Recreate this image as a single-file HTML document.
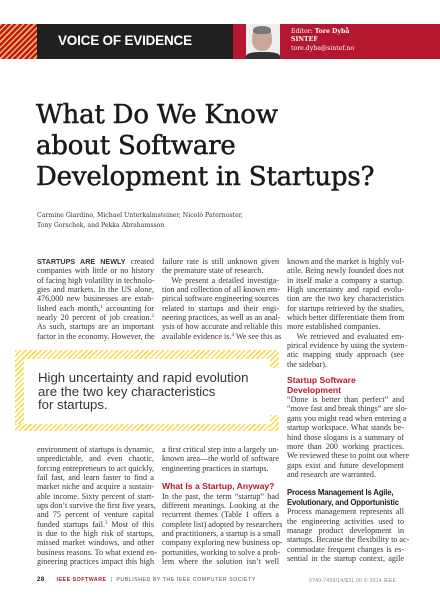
<!DOCTYPE html>
<html><head><meta charset="utf-8"><style>
*{margin:0;padding:0;box-sizing:border-box}
body{width:440px;height:600px;background:#fff;position:relative;overflow:hidden;font-family:"Liberation Serif",serif;color:#222}
.a{position:absolute}
sup{font-size:5px;line-height:0;vertical-align:3px}
.stripe{background:repeating-linear-gradient(135deg,#f0c040 0 1.5px,#c0152f 1.5px 4px)}
.ys{background:repeating-linear-gradient(135deg,#f8dd55 0 1.6px,#fff 1.6px 3.6px)}
.col{position:absolute;width:117px;font-size:8.1px;line-height:9.35px;color:#333}
.col div{height:9.35px;text-align:justify;text-align-last:justify;white-space:nowrap;overflow:visible}
.col div.l{text-align-last:left}
.col div.h,.col div.h2{height:auto}
.h{font-family:"Liberation Sans",sans-serif;font-weight:bold;color:#b5172f;font-size:8.6px;line-height:9.5px}
.h2{font-family:"Liberation Sans",sans-serif;font-weight:bold;color:#222;font-size:7.8px;line-height:9.5px;letter-spacing:-0.2px}
</style></head><body>
<div class="a stripe" style="left:0;top:24px;width:37px;height:35px"></div>
<div class="a" style="left:37px;top:24px;width:196px;height:35px;background:#221f20"></div>
<div class="a" style="left:233px;top:24px;width:207px;height:35px;background:#b5172f"></div>
<div class="a" style="left:246px;top:24px;width:34px;height:35px;background:#eee;overflow:hidden">
<div class="a" style="left:6px;top:3px;width:20px;height:24px;border-radius:45%;background:#c9a898"></div>
<div class="a" style="left:7px;top:2px;width:18px;height:8px;border-radius:50% 50% 30% 30%;background:#777"></div>
<div class="a" style="left:0;top:28px;width:34px;height:10px;border-radius:40% 40% 0 0;background:#333"></div>
</div>
<div class="a" style="left:58px;top:33px;color:#fff;font-family:'Liberation Sans',sans-serif;font-weight:bold;font-size:13.5px;letter-spacing:-0.2px">VOICE OF EVIDENCE</div>
<div class="a" style="left:291px;top:28px;color:#fff;font-family:'DejaVu Serif',serif;font-size:6.2px;line-height:8.3px">Editor: <b>Tore Dybå</b><br><b>SINTEF</b><br>tore.dyba@sintef.no</div>

<div class="a" style="left:36px;top:100px;font-family:'DejaVu Serif',serif;font-size:26px;line-height:31px;color:#1a1a1a;letter-spacing:-0.2px;-webkit-text-stroke:0.5px #1a1a1a;white-space:nowrap">What Do We Know<br>about Software<br>Development in Startups?</div>
<div class="a" style="left:37px;top:211px;font-family:'DejaVu Serif',serif;font-size:6.2px;line-height:9.5px;color:#333">Carmine Giardino, Michael Unterkalmsteiner, Nicolò Paternoster,<br>Tony Gorschek, and Pekka Abrahamsson</div>

<div class="col" style="left:37px;top:257px">
<div><b style="font-family:'Liberation Sans',sans-serif;font-size:7.2px">STARTUPS ARE NEWLY</b> created</div>
<div>companies with little or no history</div>
<div>of facing high volatility in technolo-</div>
<div>gies and markets. In the US alone,</div>
<div>476,000 new businesses are estab-</div>
<div>lished each month,<sup>1</sup> accounting for</div>
<div>nearly 20 percent of job creation.<sup>2</sup></div>
<div>As such, startups are an important</div>
<div>factor in the economy. However, the</div>
</div>
<div class="col" style="left:162px;top:257px">
<div>failure rate is still unknown given</div>
<div class="l">the premature state of research.</div>
<div>&nbsp;&nbsp;&nbsp;We present a detailed investiga-</div>
<div>tion and collection of all known em-</div>
<div>pirical software engineering sources</div>
<div>related to startups and their engi-</div>
<div>neering practices, as well as an anal-</div>
<div>ysis of how accurate and reliable this</div>
<div>available evidence is.<sup>4</sup> We see this as</div>
</div>
<div class="col" style="left:287px;top:257px">
<div>known and the market is highly vol-</div>
<div>atile. Being newly founded does not</div>
<div>in itself make a company a startup.</div>
<div>High uncertainty and rapid evolu-</div>
<div>tion are the two key characteristics</div>
<div>for startups retrieved by the studies,</div>
<div>which better differentiate them from</div>
<div class="l">more established companies.</div>
<div>&nbsp;&nbsp;&nbsp;We retrieved and evaluated em-</div>
<div>pirical evidence by using the system-</div>
<div>atic mapping study approach (see</div>
<div class="l">the sidebar).</div>
<div style="height:7px"></div>
<div class="h l">Startup Software<br>Development</div>
<div>“Done is better than perfect” and</div>
<div>“move fast and break things” are slo-</div>
<div>gans you might read when entering a</div>
<div>startup workspace. What stands be-</div>
<div>hind those slogans is a summary of</div>
<div>more than 200 working practices.</div>
<div>We reviewed these to point out where</div>
<div>gaps exist and future development</div>
<div class="l">and research are warranted.</div>
<div style="height:9px"></div>
<div class="h2 l">Process Management Is Agile,<br>Evolutionary, and Opportunistic</div>
<div>Process management represents all</div>
<div>the engineering activities used to</div>
<div>manage product development in</div>
<div>startups. Because the flexibility to ac-</div>
<div>commodate frequent changes is es-</div>
<div>sential in the startup context, agile</div>
</div>

<div class="a ys" style="left:15px;top:350px;width:264px;height:9px"></div>
<div class="a ys" style="left:15px;top:350px;width:9px;height:81px"></div>
<div class="a ys" style="left:15px;top:424px;width:264px;height:7px"></div>
<div class="a ys" style="left:270px;top:350px;width:9px;height:18px"></div>
<div class="a ys" style="left:270px;top:415px;width:9px;height:16px"></div>
<div class="a" style="left:38px;top:371px;font-family:'Liberation Sans',sans-serif;font-size:13.2px;line-height:13.5px;color:#333">High uncertainty and rapid evolution<br>are the two key characteristics<br>for startups.</div>

<div class="col" style="left:37px;top:445px">
<div>environment of startups is dynamic,</div>
<div>unpredictable, and even chaotic,</div>
<div>forcing entrepreneurs to act quickly,</div>
<div>fail fast, and learn faster to find a</div>
<div>market niche and acquire a sustain-</div>
<div>able income. Sixty percent of start-</div>
<div>ups don’t survive the first five years,</div>
<div>and 75 percent of venture capital</div>
<div>funded startups fail.<sup>3</sup> Most of this</div>
<div>is due to the high risk of startups,</div>
<div>missed market windows, and other</div>
<div>business reasons. To what extend en-</div>
<div>gineering practices impact this high</div>
</div>
<div class="col" style="left:162px;top:445px">
<div>a first critical step into a largely un-</div>
<div>known area—the world of software</div>
<div class="l">engineering practices in startups.</div>
<div style="height:9px"></div>
<div class="h l">What Is a Startup, Anyway?</div>
<div>In the past, the term “startup” had</div>
<div>different meanings. Looking at the</div>
<div>recurrent themes (Table 1 offers a</div>
<div>complete list) adopted by researchers</div>
<div>and practitioners, a startup is a small</div>
<div>company exploring new business op-</div>
<div>portunities, working to solve a prob-</div>
<div>lem where the solution isn’t well</div>
</div>

<div class="a" style="left:37px;top:577px;font-family:'Liberation Sans',sans-serif;font-size:5.3px;letter-spacing:0.5px;color:#555;white-space:nowrap"><b style="color:#222;font-size:6px">28</b>&nbsp;&nbsp;&nbsp;&nbsp;&nbsp;&nbsp;<b style="color:#b5172f">IEEE SOFTWARE</b> &nbsp;|&nbsp; PUBLISHED BY THE IEEE COMPUTER SOCIETY</div>
<div class="a" style="left:309px;top:578px;font-family:'Liberation Sans',sans-serif;font-size:5px;letter-spacing:0.3px;color:#888;white-space:nowrap">0740-7459/14/$31.00 © 2014 IEEE</div>
</body></html>
